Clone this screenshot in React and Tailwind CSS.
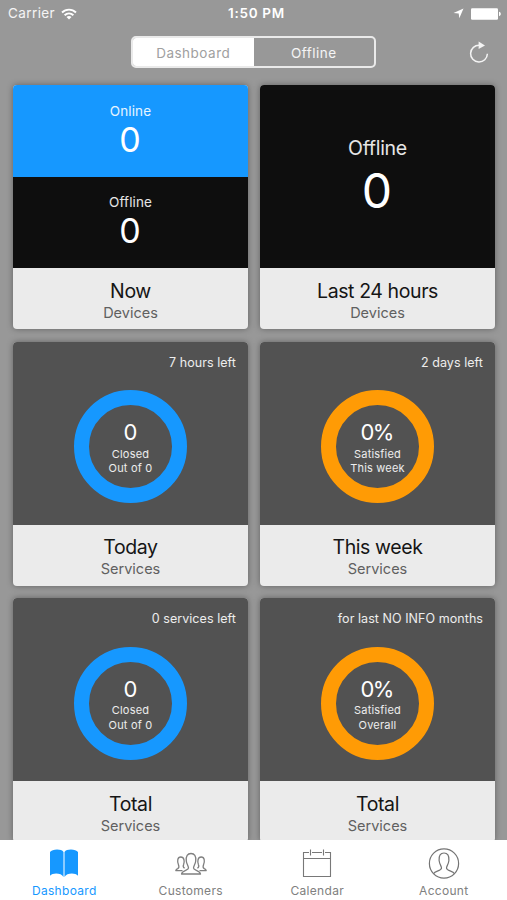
import React, { useState } from 'react';

const cards = [
  { title: 'Now', subtitle: 'Devices', type: 'split' },
  { title: 'Last 24 hours', subtitle: 'Devices', type: 'single' },
  { title: 'Today', subtitle: 'Services', type: 'ring', color: 'border-[#1698ff]', note: '7 hours left', value: '0', lines: ['Closed', 'Out of 0'] },
  { title: 'This week', subtitle: 'Services', type: 'ring', color: 'border-[#ff9b05]', note: '2 days left', value: '0%', lines: ['Satisfied', 'This week'] },
  { title: 'Total', subtitle: 'Services', type: 'ring', color: 'border-[#1698ff]', note: '0 services left', value: '0', lines: ['Closed', 'Out of 0'] },
  { title: 'Total', subtitle: 'Services', type: 'ring', color: 'border-[#ff9b05]', note: 'for last NO INFO months', value: '0%', lines: ['Satisfied', 'Overall'] },
];

function StatusBar() {
  return (
    <div className="grid h-[27px] grid-cols-3 items-center pl-[8px] pr-[6px] text-[13.5px] text-white">
      <div className="flex items-center gap-[6px]">
        <span className="tracking-[0.4px] text-white/90">Carrier</span>
        <svg width="16" height="12" viewBox="0 0 16 12" fill="none" stroke="white" strokeWidth="1.9">
          <path d="M1 4.5C5 .6 11 .6 15 4.5" />
          <path d="M3.6 7.3C6.2 4.8 9.8 4.8 12.4 7.3" />
          <path d="M8 11.4 5.5 8.9C7 7.6 9 7.6 10.5 8.9Z" fill="white" stroke="none" />
        </svg>
      </div>
      <span className="pl-[4px] text-center font-semibold tracking-[0.7px]">1:50 PM</span>
      <div className="flex items-center justify-end gap-[7px]">
        <svg width="11" height="11" viewBox="0 0 11 11" fill="white">
          <path d="M10.5.5 6.3 10.3 5.7 5.6.5 5Z" />
        </svg>
        <svg width="30" height="12" viewBox="0 0 30 12" fill="white">
          <rect x="0" y="0.2" width="27" height="11.6" rx="1.2" />
          <path d="M28 3.8c2.4.6 2.4 3.8 0 4.4Z" />
        </svg>
      </div>
    </div>
  );
}

function Header({ view, setView }) {
  return (
    <div className="grid grid-cols-[1fr_245px_1fr] items-center pt-[9px]">
      <div />
      <div className="flex h-[32px] overflow-hidden rounded-[5px] border-2 border-white/80 text-[13.5px] tracking-[0.5px]">
        {['Dashboard', 'Offline'].map((name) => (
          <button
            key={name}
            onClick={() => setView(name)}
            className={`flex-1 pt-[2px] ${view === name ? 'bg-white text-[#a0a0a0]' : 'text-white/90'}`}
          >
            {name}
          </button>
        ))}
      </div>
      <button className="justify-self-end pr-[17px]">
        <svg width="22" height="24" viewBox="0 0 22 24" fill="none" stroke="#f4f4f4" strokeWidth="1.5">
          <path d="M19.4 13.8A8.4 8.4 0 1 1 11.5 5.2" />
          <path d="M10.6 1.4 17 5.4 10.6 9Z" fill="#f4f4f4" stroke="none" />
        </svg>
      </button>
    </div>
  );
}

function DeviceCount({ label, bg }) {
  return (
    <div className={`flex-1 pt-[15.5px] text-center text-white ${bg}`}>
      <p className="text-[13.5px] leading-[20px] tracking-[0.1px] text-white/90">{label}</p>
      <p className="pr-px text-[34px] leading-[38px]">0</p>
    </div>
  );
}

function CardBody({ card }) {
  if (card.type === 'split') {
    return (
      <div className="flex h-[183px] flex-col">
        <DeviceCount label="Online" bg="bg-[#1698ff]" />
        <DeviceCount label="Offline" bg="bg-[#0e0e0e]" />
      </div>
    );
  }
  if (card.type === 'single') {
    return (
      <div className="h-[183px] bg-[#0e0e0e] pt-[49px] text-center text-white">
        <p className="text-[19.5px] leading-[28px] tracking-[-0.3px] text-white/90">Offline</p>
        <p className="pr-px text-[48px] leading-[58px]">0</p>
      </div>
    );
  }
  return (
    <div className="h-[183px] bg-[#525252] pt-[11px] text-white">
      <p className="pr-[12px] text-right text-[12.5px] leading-[19px] tracking-[0.06px] text-white/90">{card.note}</p>
      <div className={`mx-auto mt-[18.5px] size-[113px] rounded-full border-[15px] pt-[14px] text-center ${card.color}`}>
        <p className="pr-[2px] text-[22px] leading-[26px] tracking-[-1.8px]">{card.value}</p>
        <div className="pt-[1.5px] text-[11px] leading-[14.67px] tracking-[0.2px] text-white/90">
          {card.lines.map((line) => (
            <p key={line} className="whitespace-nowrap">{line}</p>
          ))}
        </div>
      </div>
    </div>
  );
}

function Card({ card }) {
  return (
    <div className="h-[244px] overflow-hidden rounded-[4px] bg-[#ebebeb] shadow-[0_0_6px_rgba(0,0,0,0.35)]">
      <CardBody card={card} />
      <div className="pt-[10.5px] text-center">
        <p className="text-[19.5px] leading-[24px] tracking-[-0.4px] text-[#151515]">{card.title}</p>
        <p className="text-[14.5px] leading-[19px] text-[#606060]">{card.subtitle}</p>
      </div>
    </div>
  );
}

const tabs = [
  {
    name: 'Dashboard',
    icon: (
      <svg width="32" height="32" viewBox="0 0 32 32" fill="#1698ff">
        <path d="M2 5C4 2 13.5 1.5 15.5 5V30C13.5 26 5 25.5 2 28.7Z" />
        <path d="M30 5C28 2 18.5 1.5 16.5 5V30C18.5 26 27 25.5 30 28.7Z" />
      </svg>
    ),
  },
  {
    name: 'Customers',
    icon: (
      <svg width="34" height="32" viewBox="0 0 34 32" fill="none" stroke="#808080" strokeWidth="1.3" strokeLinejoin="round">
        <path d="M14.5 21C14.5 19 12.6 17 12.3 14C11.8 9 13.5 6.5 17 6.5S22.2 9 21.7 14C21.4 17 19.5 19 19.5 21C19.5 23.5 26 23.1 26.5 27H7.5C8 23.1 14.5 23.5 14.5 21Z" />
        <path d="M10.6 21.2C8.9 20.2 8.9 19 9.6 17.5C10.7 14.8 10.4 10 6.8 10S3.2 14.5 4.4 17.5C5.2 19.5 5.1 21 3.7 21.7C2.5 22.2 2 22.7 1.8 23.7H8.5" />
        <path d="M23.4 21.2C25.1 20.2 25.1 19 24.4 17.5C23.3 14.8 23.6 10 27.2 10S30.8 14.5 29.6 17.5C28.8 19.5 28.9 21 30.3 21.7C31.5 22.2 32 22.7 32.2 23.7H25.5" />
      </svg>
    ),
  },
  {
    name: 'Calendar',
    icon: (
      <svg width="32" height="32" viewBox="0 0 32 32" fill="none" stroke="#787878" strokeWidth="1.1">
        <path d="M8 5.5H2.5V29.5H29.5V5.5H24M11 5.5H21M2.5 11.5H29.5M9.5 2.5V8.5M22.5 2.5V8.5" />
      </svg>
    ),
  },
  {
    name: 'Account',
    icon: (
      <svg width="32" height="32" viewBox="0 0 32 32" fill="none" stroke="#747474" strokeWidth="1.2">
        <circle cx="16" cy="16.5" r="14.6" />
        <path d="M5.5 26.7C7 23.5 13.5 24 13.5 21C13.5 19 11.5 17.5 11.1 13.5C10.7 8.5 12.5 6 16 6S21.3 8.5 20.9 13.5C20.5 17.5 18.5 19 18.5 21C18.5 24 25 23.5 26.5 26.7" />
      </svg>
    ),
  },
];

function TabBar() {
  const [active, setActive] = useState('Dashboard');

  return (
    <nav className="grid h-[60px] shrink-0 grid-cols-4 bg-white pl-px">
      {tabs.map((tab) => (
        <button
          key={tab.name}
          onClick={() => setActive(tab.name)}
          className={`flex flex-col items-center pt-[7px] text-[12px] tracking-[0.3px] ${active === tab.name ? 'text-[#1698ff]' : 'text-[#808080]'}`}
        >
          {tab.icon}
          <span className="mt-[4px] leading-[16px]">{tab.name}</span>
        </button>
      ))}
    </nav>
  );
}

export default function App() {
  const [view, setView] = useState('Dashboard');

  return (
    <div className="flex h-[900px] w-[507px] flex-col overflow-hidden bg-[#989898] font-['Inter',sans-serif]">
      <StatusBar />
      <Header view={view} setView={setView} />
      {/* The last row runs under the tab bar */}
      <main className="min-h-0 flex-1 overflow-hidden pt-[17px]">
        <div className="grid grid-cols-[235px_235px] gap-x-[12px] gap-y-[12.5px] pl-[13px]">
          {cards.map((card, index) => (
            <Card key={index} card={card} />
          ))}
        </div>
      </main>
      <TabBar />
    </div>
  );
}
